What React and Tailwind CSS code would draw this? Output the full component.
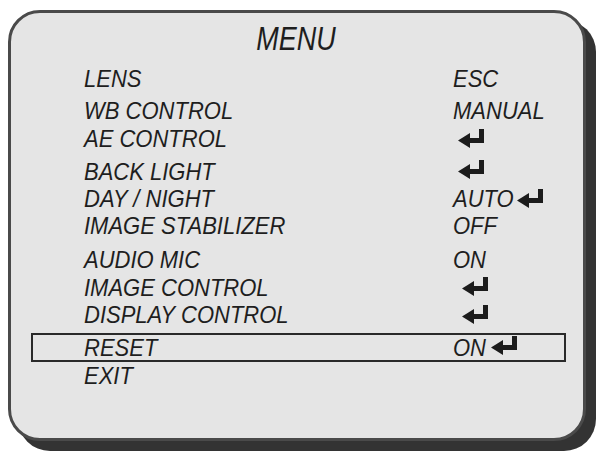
import React from 'react'

function ReturnArrow({ className = '' }) {
  return (
    <svg viewBox="0 0 27 20" width="27" height="20" className={`shrink-0 ${className}`}>
      <path d="M21 0h5v14h-5z M11 9h15v5h-15z" fill="#1c1c1c" />
      <path d="M0 11.5 L12 4 L12 19 Z" fill="#1c1c1c" />
    </svg>
  )
}

const ROWS = [
  { label: 'LENS',             value: 'ESC',    h: 'h-[32px]' },
  { label: 'WB CONTROL',       value: 'MANUAL', h: 'h-[28px]' },
  { label: 'AE CONTROL',       arrow: 'ml-[5px]', h: 'h-[33px]' },
  { label: 'BACK LIGHT',       arrow: 'ml-[5px] -mt-[4px]', h: 'h-[27px]' },
  { label: 'DAY / NIGHT',      value: 'AUTO',   arrow: 'ml-[3px]', h: 'h-[27px]' },
  { label: 'IMAGE STABILIZER', value: 'OFF',    h: 'h-[34px]' },
  { label: 'AUDIO MIC',        value: 'ON',     h: 'h-[28px]' },
  { label: 'IMAGE CONTROL',    arrow: 'ml-[9px] -mt-[2px]', h: 'h-[27px]' },
  { label: 'DISPLAY CONTROL',  arrow: 'ml-[9px]', h: 'h-[32px]' },
]

// the OSD font is a bit taller than Arial at the same width
const TXT = 'inline-block scale-y-[1.12]'

function Row({ row }) {
  return (
    <div className={`flex items-start pl-[53px] ${row.h}`}>
      <div className="w-[369px] leading-[28px]"><span className={TXT}>{row.label}</span></div>
      <div className="flex h-[28px] items-center">
        {row.value && <span className={`leading-[28px] ${TXT}`}>{row.value}</span>}
        {row.arrow && <ReturnArrow className={row.arrow} />}
      </div>
    </div>
  )
}

export default function App() {
  return (
    <div className="min-h-screen bg-white pl-[8px] pt-[10px]">
      <div
        className="w-[578px] h-[431px] rounded-[32px] border-[3px] border-[#4a4a4a] bg-[#e5e5e5] shadow-[10px_10px_0_#333] pt-[14px] text-[22px] italic text-[#1e1e1e]"
        style={{ fontFamily: '"Liberation Sans", Arial, sans-serif' }}
      >
        <div className="h-[38px] flex justify-center">
          <span className="text-[27px] leading-[27px] inline-block scale-y-[1.25] pr-[2px]">MENU</span>
        </div>

        <div className="ml-[20px] w-[535px]">
          {ROWS.map(r => <Row key={r.label} row={r} />)}

          {/* selected row */}
          <div className="flex items-start h-[29px] border-2 border-[#2a2a2a] pl-[51px]">
            <div className="w-[369px] leading-[25px]"><span className={TXT}>RESET</span></div>
            <div className="flex h-[25px] items-center">
              <span className={`leading-[25px] ${TXT}`}>ON</span>
              <ReturnArrow className="ml-[5px] -mt-[3px]" />
            </div>
          </div>

          <div className="flex items-start h-[28px] pl-[53px]">
            <div className="leading-[28px]"><span className={TXT}>EXIT</span></div>
          </div>
        </div>
      </div>
    </div>
  )
}
